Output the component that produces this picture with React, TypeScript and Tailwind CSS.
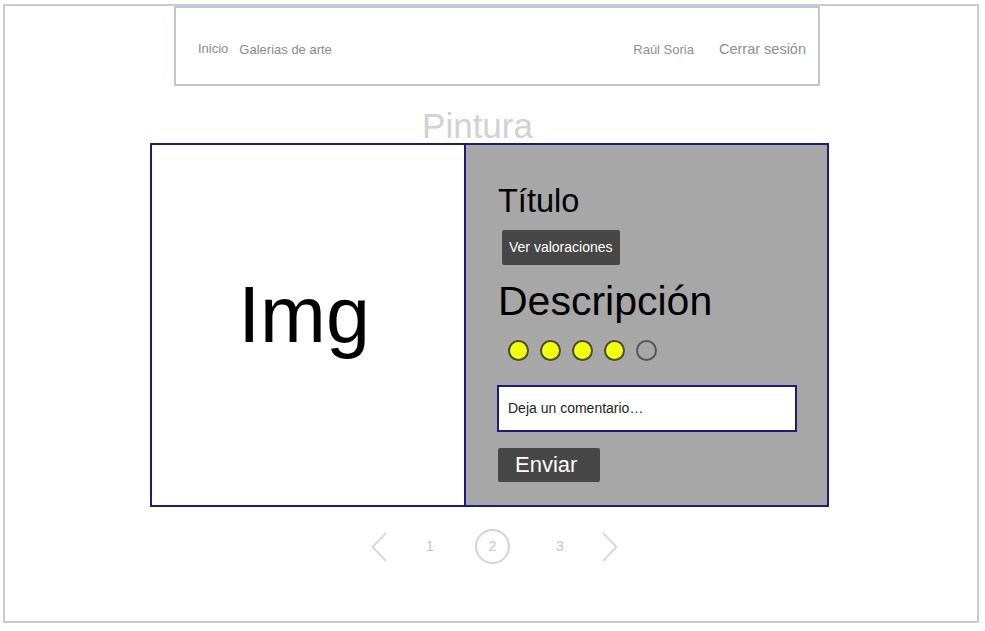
import React from "react";

const ratings = [true, true, true, true, false];

const ChevronLeft = () => (
  <svg width="16" height="30" viewBox="0 0 16 30" fill="none">
    <path d="M15 1L1.5 15L15 29" stroke="#cfcfd6" strokeWidth="1.6" />
  </svg>
);

const ChevronRight = () => (
  <svg width="16" height="30" viewBox="0 0 16 30" fill="none">
    <path d="M1 1L14.5 15L1 29" stroke="#cfcfd6" strokeWidth="1.6" />
  </svg>
);

export default function App() {
  return (
    <div
      className="w-[985px] h-[631px] bg-white overflow-hidden"
      style={{ fontFamily: '"Liberation Sans", Arial, sans-serif' }}
    >
      <div className="mt-[4px] ml-[3px] w-[976px] h-[619px] border-2 border-[#c8c8de] flex flex-col">
        {/* Navbar */}
        <nav className="ml-[169px] w-[646px] h-[80px] border-2 border-[#c2c2da] flex items-center pt-[8px] pl-[22px] pr-[12px]">
          <a className="text-[13px] text-[#8a8a8a] -mt-[2px]">Inicio</a>
          <a className="ml-[11px] text-[13px] text-[#8a8a8a]">Galerias de arte</a>
          <div className="ml-auto flex items-center">
            <a className="text-[13px] text-[#8e8e8e]">Raúl Soria</a>
            <a className="ml-[25px] text-[14.5px] text-[#8e8e8e]">Cerrar sesión</a>
          </div>
        </nav>

        {/* Heading */}
        <h1 className="mt-[22px] ml-[145px] w-[655px] text-center text-[35px] leading-none text-[#d2d2d2]">
          Pintura
        </h1>

        {/* Card */}
        <div className="ml-[145px] w-[679px] h-[364px] border-2 border-[#1c1c78] flex">
          <div className="w-[314px] border-r-2 border-[#1c1c78] bg-white flex items-center justify-center pb-[22px] pr-[8px]">
            <span className="text-[79px] leading-none text-black">Img</span>
          </div>
          <div className="flex-1 bg-[#a7a7a7] flex flex-col items-start pl-[32px] pt-[40px]">
            <h2 className="text-[32.5px] leading-none text-black">Título</h2>
            <button className="mt-[12px] ml-[4px] h-[35px] px-[7px] bg-[#474747] rounded-[2px] text-[14px] text-white">
              Ver valoraciones
            </button>
            <p className="mt-[16px] text-[41px] leading-none text-black">Descripción</p>
            <div className="mt-[18px] ml-[10px] flex gap-[11px]">
              {ratings.map((on, i) => (
                <span
                  key={i}
                  className={
                    on
                      ? "w-[21px] h-[21px] rounded-full border-2 border-[#4a4a28] bg-[#f2ff10]"
                      : "w-[21px] h-[21px] rounded-full border-2 border-[#555555]"
                  }
                />
              ))}
            </div>
            <input
              className="mt-[24px] -ml-[1px] w-[300px] h-[47px] border-2 border-[#1c1c78] bg-white px-[9px] text-[14px] text-[#222] placeholder:text-[#222] outline-none"
              placeholder="Deja un comentario…"
            />
            <button className="mt-[16px] h-[34px] w-[102px] pl-[17px] text-left bg-[#474747] rounded-[2px] text-[22px] leading-none text-white">
              Enviar
            </button>
          </div>
        </div>

        {/* Pagination */}
        <div className="mt-[22px] ml-[366px] flex items-center h-[35px] text-[14px] text-[#c4c4c4]">
          <ChevronLeft />
          <span className="ml-[36px] w-[14px] text-center">1</span>
          <span className="ml-[38px] w-[35px] h-[35px] rounded-full border-2 border-[#d2d2d2] flex items-center justify-center">
            2
          </span>
          <span className="ml-[43px] w-[14px] text-center">3</span>
          <span className="ml-[35px]">
            <ChevronRight />
          </span>
        </div>
      </div>
    </div>
  );
}
